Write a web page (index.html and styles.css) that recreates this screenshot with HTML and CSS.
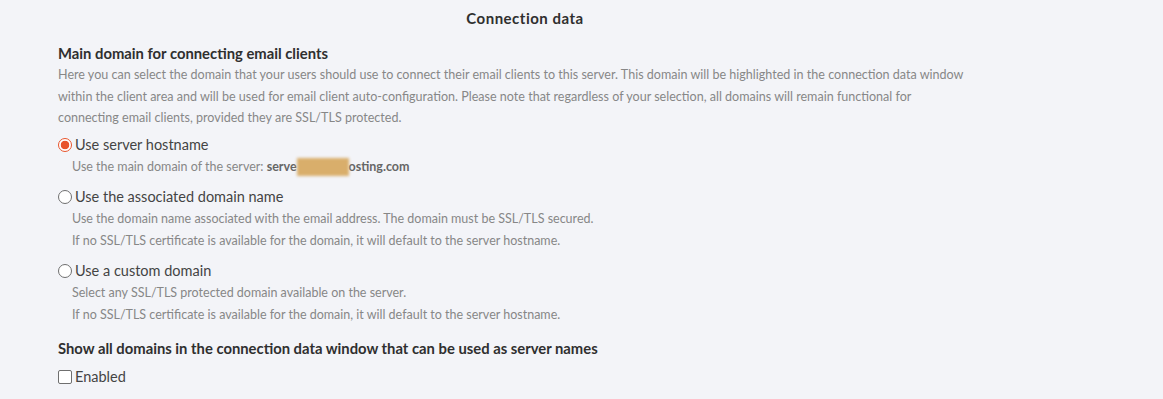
FILE: index.html
```html
<!DOCTYPE html>
<html lang="en">
<head>
    <meta charset="UTF-8">
    <title>Connection data</title>
    <link rel="stylesheet" href="styles.css">
</head>
<body>
    <div class="panel">
        <h1 class="title">Connection data</h1>

        <!-- Main domain selection -->
        <h2 class="heading">Main domain for connecting email clients</h2>
        <p class="desc">
            Here you can select the domain that your users should use to connect their email clients to this server. This domain will be highlighted in the connection data window<br>
            within the client area and will be used for email client auto-configuration. Please note that regardless of your selection, all domains will remain functional for<br>
            connecting email clients, provided they are SSL/TLS protected.
        </p>

        <div class="option">
            <label class="option-label"><span class="radio checked"></span>Use server hostname</label>
            <p class="sub">Use the main domain of the server: <b class="host">serve<span class="redact"></span>osting.com</b></p>
        </div>

        <div class="option">
            <label class="option-label"><span class="radio"></span>Use the associated domain name</label>
            <p class="sub">Use the domain name associated with the email address. The domain must be SSL/TLS secured.</p>
            <p class="sub">If no SSL/TLS certificate is available for the domain, it will default to the server hostname.</p>
        </div>

        <div class="option">
            <label class="option-label"><span class="radio"></span>Use a custom domain</label>
            <p class="sub">Select any SSL/TLS protected domain available on the server.</p>
            <p class="sub">If no SSL/TLS certificate is available for the domain, it will default to the server hostname.</p>
        </div>

        <h2 class="heading heading-second">Show all domains in the connection data window that can be used as server names</h2>
        <label class="option-label check-row"><span class="checkbox"></span>Enabled</label>
    </div>
</body>
</html>
```

FILE: styles.css
```css
body {
    margin: 0;
    padding: 0;
    background-color: #f3f4f8;
    font-family: 'Lato', 'Open Sans', sans-serif;
    color: #333333;
}

.panel {
    width: 1050px;
    padding: 8px 0 0 58px;
    box-sizing: border-box;
}

.title {
    margin: 0 0 0 -58px;
    font-size: 15px;
    font-weight: bold;
    letter-spacing: 0.5px;
    line-height: 20px;
    text-align: center;
    color: #2f2f2f;
}

.heading {
    margin: 15px 0 0 0;
    font-size: 14.8px;
    font-weight: bold;
    line-height: 20px;
    color: #2f2f2f;
}

.heading-second {
    margin-top: 12px;
}

.desc {
    margin: 1px 0 0 0;
    font-size: 12.55px;
    line-height: 21.5px;
    color: #878787;
}

.option {
    margin-top: 6px;
}

.option + .option {
    margin-top: 9px;
}

.option-label {
    display: flex;
    align-items: center;
    font-size: 14.5px;
    line-height: 20px;
    color: #444444;
}

.radio {
    width: 14px;
    height: 14px;
    box-sizing: border-box;
    border: 1px solid #6f6f6f;
    border-radius: 50%;
    background-color: #ffffff;
    margin-right: 3px;
}

.radio.checked {
    border: 1.5px solid #e8542c;
    background: radial-gradient(circle, #e8542c 0 4px, #ffffff 4.6px);
}

.checkbox {
    width: 14px;
    height: 14px;
    box-sizing: border-box;
    border: 1px solid #6f6f6f;
    border-radius: 2px;
    background-color: #ffffff;
    margin-right: 3px;
}

.sub {
    margin: 0 0 0 14px;
    font-size: 12.5px;
    line-height: 22px;
    color: #878787;
}

.option-label + .sub {
    margin-top: 1px;
}

.host {
    color: #666666;
}

.redact {
    display: inline-block;
    width: 52px;
    height: 18px;
    vertical-align: middle;
    background-color: #d9ae6b;
    filter: blur(1.5px);
}

.check-row {
    margin-top: 9px;
}
```
